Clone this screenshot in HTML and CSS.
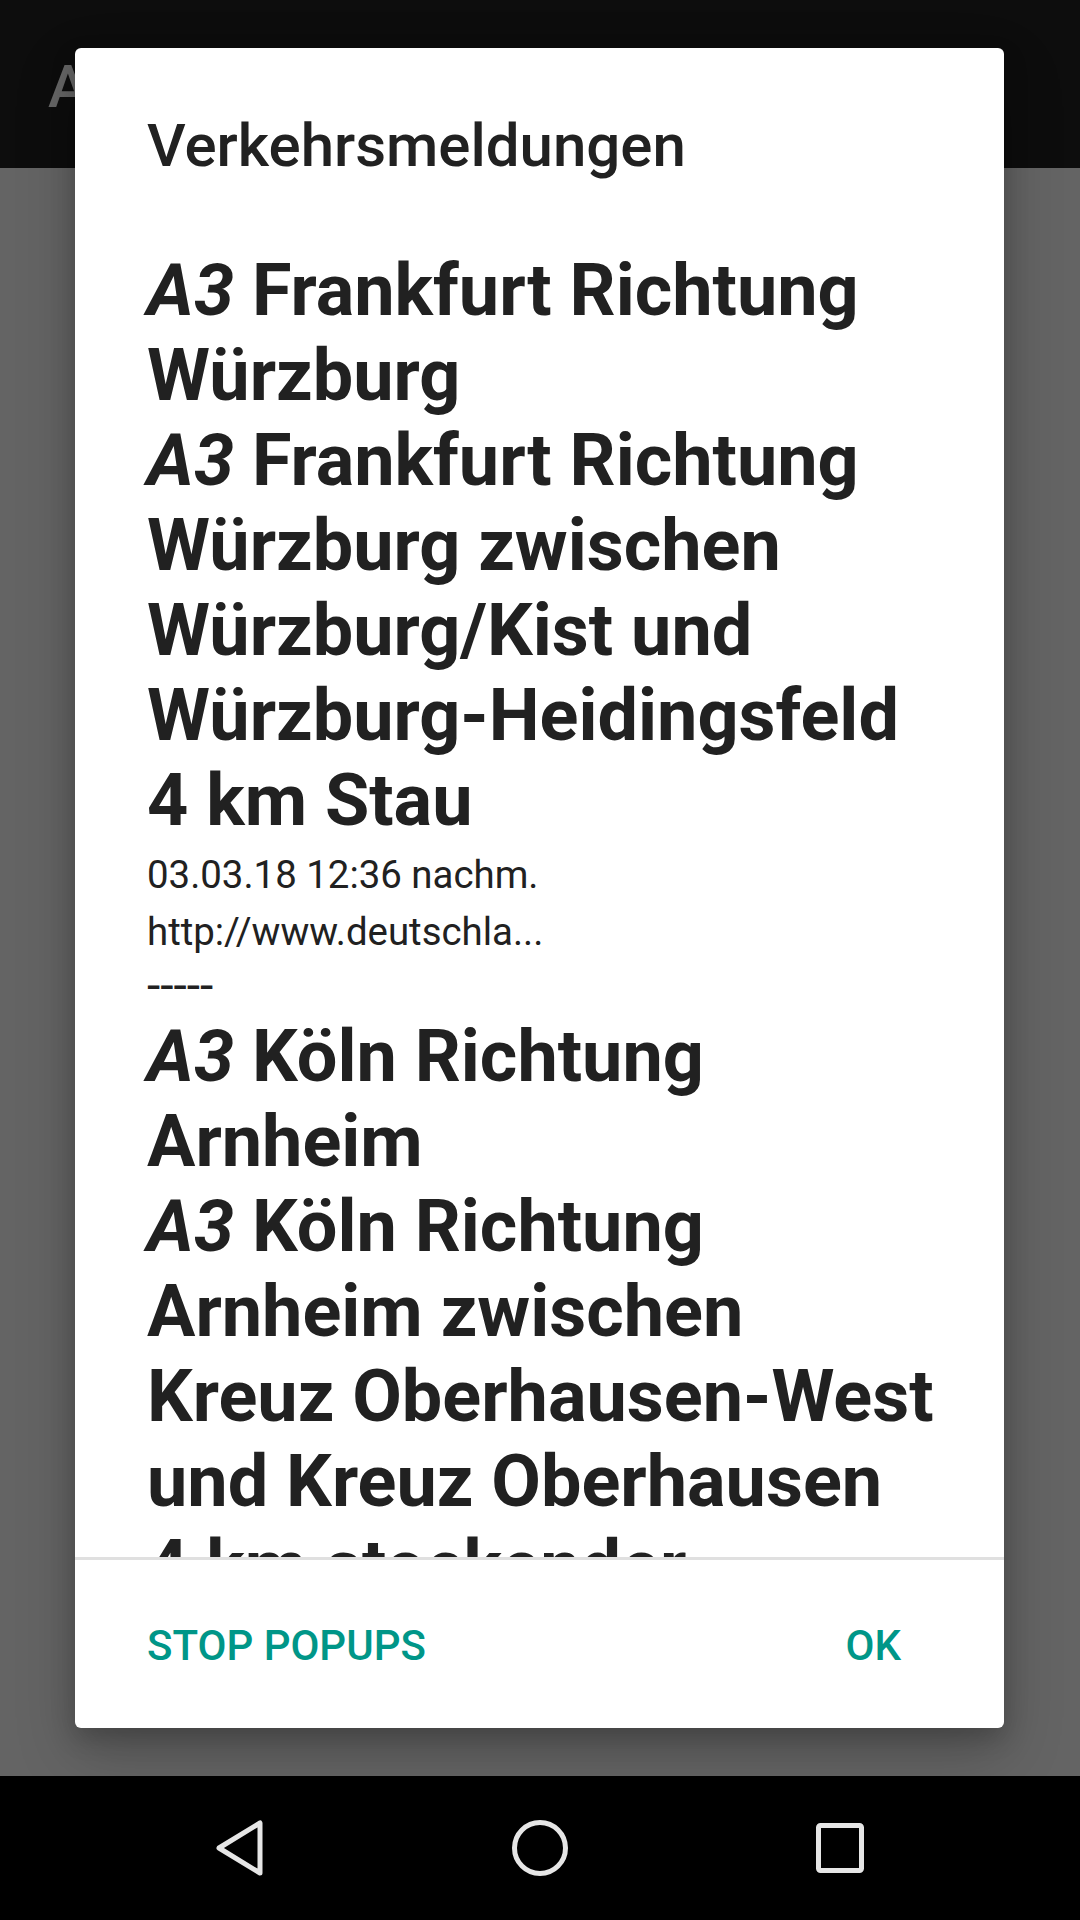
FILE: index.html
```html
<!DOCTYPE html>
<html lang="de">
<head>
    <meta charset="UTF-8">
    <meta name="viewport" content="width=device-width, initial-scale=1.0">
    <title>Verkehrsmeldungen</title>
    <link rel="stylesheet" href="styles.css">
</head>
<body>
    <div class="screen">
        <div class="appbar">
            <span class="appbar-title">A3 Stau</span>
        </div>

        <div class="page"></div>

        <div class="navbar">
            <button class="nav-btn" aria-label="Zurück">
                <svg width="60" height="60" viewBox="0 0 60 60">
                    <path d="M50 5 L50 55 L9 30 Z" fill="none" stroke="#e6e6e6" stroke-width="5" stroke-linejoin="round"/>
                </svg>
            </button>
            <button class="nav-btn" aria-label="Startseite">
                <svg width="60" height="60" viewBox="0 0 60 60">
                    <circle cx="30" cy="30" r="25.5" fill="none" stroke="#e6e6e6" stroke-width="5"/>
                </svg>
            </button>
            <button class="nav-btn" aria-label="Übersicht">
                <svg width="60" height="60" viewBox="0 0 60 60">
                    <rect x="8.5" y="7.5" width="43" height="45" rx="2" fill="none" stroke="#e6e6e6" stroke-width="5"/>
                </svg>
            </button>
        </div>
    </div>

    <div class="dialog">
        <h1 class="dialog-title">Verkehrsmeldungen</h1>

        <div class="dialog-body">
            <div class="msg-head"><em>A3</em> Frankfurt Richtung<br>Würzburg</div>
            <div class="msg-head"><em>A3</em> Frankfurt Richtung<br>Würzburg zwischen<br>Würzburg/Kist und<br>Würzburg-Heidingsfeld<br>4 km Stau</div>
            <div class="msg-meta"><small>03.03.18 12:36 nachm.</small></div>
            <div class="msg-meta"><small>http://www.deutschla...</small></div>
            <div class="msg-meta">-----</div>

            <div class="msg-head"><em>A3</em> Köln Richtung<br>Arnheim</div>
            <div class="msg-head"><em>A3</em> Köln Richtung<br>Arnheim zwischen<br>Kreuz Oberhausen-West<br>und Kreuz Oberhausen<br>4 km stockender</div>
        </div>

        <div class="dialog-actions">
            <button class="text-btn">STOP POPUPS</button>
            <button class="text-btn">OK</button>
        </div>
    </div>
</body>
</html>
```

FILE: styles.css
```css
body {
    margin: 0;
    padding: 0;
    width: 1080px;
    height: 1920px;
    overflow: hidden;
    position: relative;
    font-family: Roboto, "Noto Sans", Arial, sans-serif;
    background-color: #646464;
}
.screen {
    display: flex;
    flex-direction: column;
    height: 1920px;
}
.appbar {
    height: 168px;
    box-sizing: border-box;
    padding: 5px 48px 0;
    display: flex;
    align-items: center;
    background: #0d0d0d;
}
.appbar-title {
    font-size: 60px;
    line-height: 71px;
    font-weight: 500;
    color: #666;
    white-space: nowrap;
}
.page {
    flex: 1;
    background: #646464;
}
.navbar {
    height: 144px;
    background: #000;
    display: grid;
    grid-template-columns: repeat(3, 300px);
    justify-content: center;
    align-items: center;
}
.nav-btn {
    border: none;
    background: none;
    padding: 0;
    height: 144px;
    display: flex;
    align-items: center;
    justify-content: center;
}
.nav-btn svg {
    display: block;
}

/* dialog sits over the dimmed page */
.dialog {
    position: absolute;
    top: 48px;
    left: 75px;
    width: 929px;
    height: 1680px;
    display: flex;
    flex-direction: column;
    background: #fff;
    border-radius: 6px;
    box-shadow: 0 24px 60px rgba(0, 0, 0, 0.22), 0 10px 24px rgba(0, 0, 0, 0.18);
}
.dialog-title {
    margin: 0;
    padding: 62px 72px 0;
    font-size: 60px;
    line-height: 71px;
    font-weight: 500;
    color: #212121;
    white-space: nowrap;
}
.dialog-body {
    flex: 1;
    min-height: 0;
    overflow: hidden;
    padding: 67px 72px 0;
    font-size: 48px;
    color: #212121;
}
.msg-head {
    font-size: 72px;
    line-height: 85px;
    font-weight: 700;
    white-space: nowrap;
}
.msg-head em {
    font-style: italic;
}
.msg-meta {
    line-height: 57px;
    white-space: nowrap;
}
.msg-meta small {
    font-size: 0.8em;
    line-height: 1;
}
.dialog-actions {
    height: 171px;
    box-sizing: border-box;
    border-top: 3px solid #e0e0e0;
    padding: 4px 103px 0 72px;
    display: flex;
    justify-content: space-between;
    align-items: center;
}
.text-btn {
    border: none;
    background: none;
    padding: 0;
    font-family: Roboto, "Noto Sans", Arial, sans-serif;
    font-size: 42px;
    line-height: 50px;
    font-weight: 500;
    color: #009688;
}
```
